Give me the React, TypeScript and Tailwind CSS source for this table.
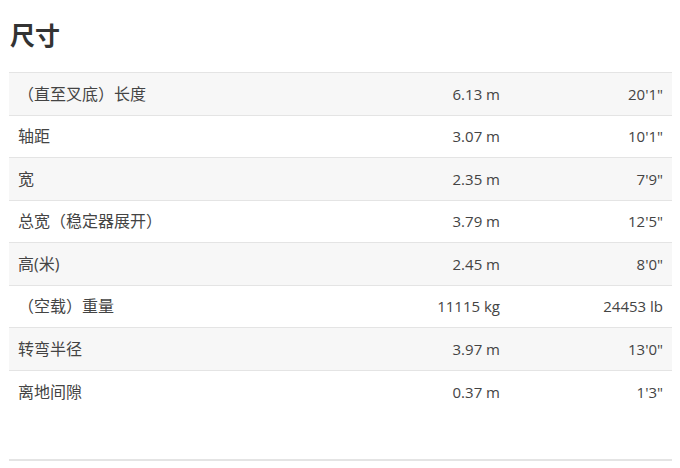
const rows: [string, string, string][] = [
  ["（直至叉底）长度", "6.13 m", "20'1\""],
  ["轴距", "3.07 m", "10'1\""],
  ["宽", "2.35 m", "7'9\""],
  ["总宽（稳定器展开）", "3.79 m", "12'5\""],
  ["高(米)", "2.45 m", "8'0\""],
  ["（空载）重量", "11115 kg", "24453 lb"],
  ["转弯半径", "3.97 m", "13'0\""],
  ["离地间隙", "0.37 m", "1'3\""],
];

const App = () => {
  return (
    <main
      className="w-[680px] h-[468px] bg-white text-[#333] pl-[9px] pr-[8px] pt-[17px]"
      style={{ fontFamily: '"Open Sans", "Noto Sans CJK SC", sans-serif' }}
    >
      {/* heading */}
      <h2 className="text-[25px] font-bold leading-[36px] pl-[1px] text-[#333]">尺寸</h2>

      {/* spec table */}
      <div className="mt-[19px] border-t border-[#e4e4e4]">
        {rows.map((row, index) => (
          <div
            key={index}
            className={`grid grid-cols-[1fr_164px_164px] h-[42.5px] items-center text-[15px] text-[#444] ${
              index < rows.length - 1 ? "border-b border-[#e4e4e4]" : ""
            } ${index % 2 === 0 ? "bg-[#f7f7f7]" : "bg-white"}`}
          >
            <div className="pl-[9px] text-[16px]">{row[0]}</div>
            <div className="text-right pr-[8px]">{row[1]}</div>
            <div className="text-right pr-[9px]">{row[2]}</div>
          </div>
        ))}
      </div>

      {/* bottom divider */}
      <div className="mt-[46px] border-t-2 border-[#e4e4e4]" />
    </main>
  );
};

export default App;
